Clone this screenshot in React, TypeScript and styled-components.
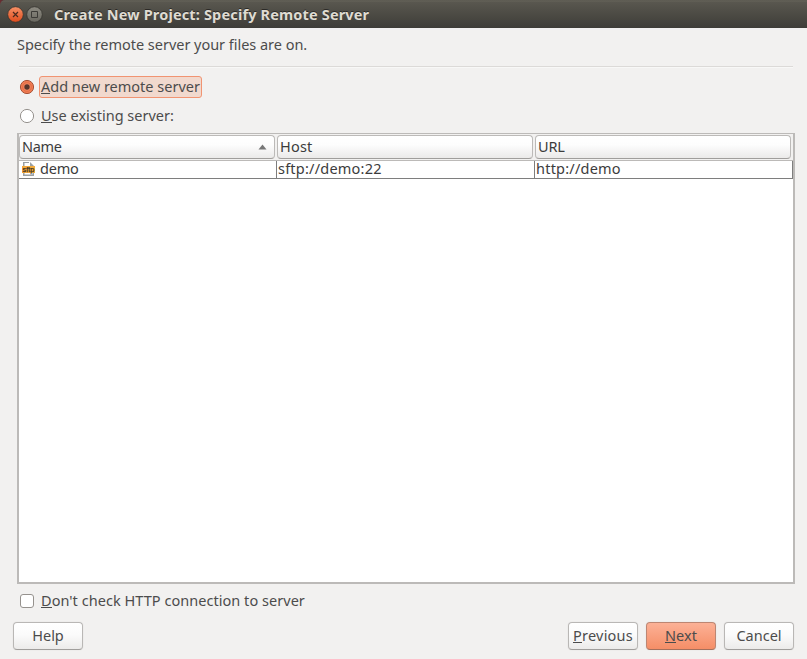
import React from 'react';
import styled, { createGlobalStyle, css } from 'styled-components';

const Global = createGlobalStyle`
  * { box-sizing: border-box; }
  body { margin: 0; background: #f2f1f0; overflow: hidden; }
  button { font: inherit; }
`;

const Window = styled.div`
  width: 807px;
  height: 659px;
  display: flex;
  flex-direction: column;
  background: #f2f1f0;
  color: #4c4c4c;
  font: 14.5px/20px 'Noto Sans', 'Open Sans', sans-serif;
  white-space: nowrap;
`;

const TitleBar = styled.header`
  height: 28px;
  flex: none;
  display: flex;
  align-items: center;
  padding: 1px 0 0 7px;
  gap: 2px;
  background: linear-gradient(#57554d 0, #66645a 1px, #59574f 2px, #3f3e39 27px, #3c3b37 28px);
  border-radius: 5px 0 0 0;
  color: #dfdbd2;
`;

const Corner = styled.div`
  background: linear-gradient(90deg, #6e2b30 0, #3c3b37 6px);
`;

const Text = styled.span<{ $track?: number }>`
  display: block;
  letter-spacing: ${(p) => p.$track ?? 0}px;
`;

const Title = styled(Text)`
  margin: 0 0 2px 9px;
  font-size: 14.5px;
  font-weight: 700;
  text-shadow: 0 -1px 0 #2b2a27;
`;

const Body = styled.main`
  flex: 1;
  display: flex;
  flex-direction: column;
  padding: 6px 12px 8px 17px;
`;

const Rule = styled.hr`
  width: 774px;
  height: 2px;
  margin: 12px 0 0 2px;
  border: 0;
  border-top: 1px solid #dcdad8;
  background: #f8f8f7;
`;

const Choice = styled.label<{ $gap: number }>`
  display: flex;
  align-items: center;
  height: 22px;
  margin-top: ${(p) => p.$gap}px;
  padding-left: 2px;
`;

const ChoiceText = styled(Text)<{ $focused?: boolean }>`
  height: 22px;
  line-height: 18px;
  margin-left: 4px;
  padding: 0 1px;
  border: 1px solid transparent;
  border-radius: 3px;
  ${(p) => p.$focused && css`
    width: 163px;
    border-color: #f19472;
    background: #f1d9ce;
  `}
`;

const Key = styled.span`
  box-shadow: inset 0 -1px 0 #4c4c4c;
  display: inline-block;
  height: 18px;
  line-height: 20px;
  margin-top: -1px;
`;

const Table = styled.section`
  width: 778px;
  height: 451px;
  margin-top: 6px;
  border: 1px solid #bcbab8;
  border-width: 1px 2px 2px;
  background: #fff;
  color: #3c3c3c;
`;

const HeadRow = styled.div`
  display: flex;
  gap: 2px;
  height: 27px;
  padding-top: 1px;
  background: #f2f1f0;
  border-bottom: 1px solid #bcbab8;
`;

const HeadCell = styled.div`
  display: flex;
  align-items: center;
  justify-content: space-between;
  width: 256px;
  height: 24px;
  padding: 0 7px 2px 2px;
  border: 1px solid #bcbab8;
  border-bottom-color: #a09e9c;
  border-radius: 4px;
  background: linear-gradient(#fff, #fdfdfd 40%, #ebeae9);
`;

const Row = styled.div`
  display: flex;
  height: 18px;
  border-bottom: 1px solid #7e7e7e;
`;

const Cell = styled.div`
  display: flex;
  align-items: center;
  width: 258px;
  height: 17px;
  padding: 0 0 3px 1px;
  border-right: 1px solid #7e7e7e;
  gap: 3px;
`;

const Footer = styled.footer`
  display: flex;
  gap: 8px;
  margin: 10px 0 0 -4px;
`;

const Button = styled.button<{ $primary?: boolean; $push?: boolean }>`
  width: 70px;
  height: 28px;
  padding: 0 0 2px;
  display: flex;
  align-items: center;
  justify-content: center;
  margin-left: ${(p) => (p.$push ? '477px' : '0')};
  border: 1px solid ${(p) => (p.$primary ? '#bd8672' : '#b9b7b5')};
  border-bottom-color: ${(p) => (p.$primary ? '#a5705c' : '#a09e9c')};
  border-radius: 4px;
  background: ${(p) => (p.$primary ? 'linear-gradient(#fcb196, #f58e67)' : 'linear-gradient(#fff, #fbfbfb 45%, #ecebea)')};
  box-shadow: 0 0 0 1px #eeedec;
  color: #4c4c4c;
`;

const WindowButton = ({ close }: { close?: boolean }) => (
  <svg width="17" height="17" viewBox="0 0 17 17">
    <defs>
      <linearGradient id={close ? 'red' : 'grey'} x2="0" y2="1">
        <stop stopColor={close ? '#f79267' : '#8d8b82'} />
        <stop offset="1" stopColor={close ? '#df4b1c' : '#69675f'} />
      </linearGradient>
    </defs>
    <circle cx="8.5" cy="8.5" r="7.8" fill={close ? 'url(#red)' : 'url(#grey)'} stroke="#35342f" strokeWidth=".8" />
    {close
      ? <path d="m6 6 5 5m0-5-5 5" stroke="#4b2a1e" strokeWidth="1.2" />
      : <path d="M5.5 5.5h6v6h-6z" fill="none" stroke="#3c3b37" />}
  </svg>
);

const Radio = ({ on }: { on?: boolean }) => (
  <svg width="16" height="16" viewBox="0 0 16 16">
    <circle cx="8" cy="8" r="6.6" fill={on ? '#f17c52' : '#fff'} stroke={on ? '#a65338' : '#96928e'} />
    {on && <><circle cx="8" cy="8" r="4.2" fill="#f58a62" stroke="#d9633d" strokeWidth=".8" /><circle cx="8" cy="8" r="2.7" fill="#56352b" /></>}
  </svg>
);

const Check = () => (
  <svg width="16" height="16" viewBox="0 0 16 16">
    <rect x="1.5" y="1.5" width="13" height="13" rx="2.5" fill="#fff" stroke="#96928e" />
  </svg>
);

const SftpIcon = styled.svg`
  flex: none;
  margin: 2px 0 0 1px;
  font: 400 8px 'Liberation Sans', sans-serif;
`;

const FileIcon = () => (
  <SftpIcon width="16" height="16" viewBox="0 0 16 16">
    <path d="M2 1h7l4 4v10H2z" fill="#fff" />
    <path d="M2 1h6v1H3.5v3H2zM9 1l4 4H9z" fill="#9aa0a4" />
    <path d="M2 12v3h11v-3h-1.5v1.6h-8V12z" fill="#9aa0a4" />
    <path d="M1 5h13v7H1z" fill="#f2a93b" />
    <text x="1.6" y="10.8" textLength="11.8" lengthAdjust="spacingAndGlyphs" fill="#3b3023" stroke="#3b3023" strokeWidth=".25">sftp</text>
  </SftpIcon>
);

const ArrowSvg = styled.svg`
  margin-top: 2px;
`;

const SortArrow = () => (
  <ArrowSvg width="9" height="6" viewBox="0 0 9 6"><path d="M.5 5.5 4.5.5l4 5z" fill="#777" /></ArrowSvg>
);

export default function App() {
  return (
    <Window>
      <Global />
      <Corner>
        <TitleBar>
          <WindowButton close />
          <WindowButton />
          <Title $track={0.16}>Create New Project: Specify Remote Server</Title>
        </TitleBar>
      </Corner>
      <Body>
        <Text $track={-0.03}>Specify the remote server your files are on.</Text>
        <Rule />
        <Choice $gap={8}>
          <Radio on />
          <ChoiceText $focused><Key>A</Key>dd new remote server</ChoiceText>
        </Choice>
        <Choice $gap={7}>
          <Radio />
          <ChoiceText><Key>U</Key>se existing server:</ChoiceText>
        </Choice>
        <Table>
          <HeadRow>
            <HeadCell><Text $track={-0.3}>Name</Text><SortArrow /></HeadCell>
            <HeadCell><Text $track={0.2}>Host</Text></HeadCell>
            <HeadCell><Text $track={-0.2}>URL</Text></HeadCell>
          </HeadRow>
          <Row>
            <Cell><FileIcon /><Text $track={-0.2}>demo</Text></Cell>
            <Cell><Text $track={0.22}>sftp://demo:22</Text></Cell>
            <Cell><Text $track={0.22}>http://demo</Text></Cell>
          </Row>
        </Table>
        <Choice $gap={6}>
          <Check />
          <ChoiceText $track={0.04}><Key>D</Key>on't check HTTP connection to server</ChoiceText>
        </Choice>
        <Footer>
          <Button><Text>Help</Text></Button>
          <Button $push><Text $track={0.2}><Key>P</Key>revious</Text></Button>
          <Button $primary><Text $track={0.1}><Key>N</Key>ext</Text></Button>
          <Button><Text>Cancel</Text></Button>
        </Footer>
      </Body>
    </Window>
  );
}
